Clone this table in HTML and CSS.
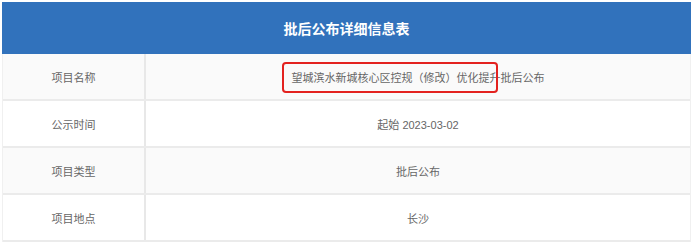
FILE: index.html
```html
<!DOCTYPE html>
<html lang="zh">
<head>
<meta charset="utf-8">
<link rel="stylesheet" href="styles.css">
</head>
<body>
<div class="sheet">
  <div class="head">批后公布详细信息表</div>
  <div class="row alt">
    <div class="label">项目名称</div>
    <div class="value mark-host">望城滨水新城核心区控规（修改）优化提升批后公布<span class="mark"></span></div>
  </div>
  <div class="row">
    <div class="label">公示时间</div>
    <div class="value">起始 2023-03-02</div>
  </div>
  <div class="row alt">
    <div class="label">项目类型</div>
    <div class="value">批后公布</div>
  </div>
  <div class="row">
    <div class="label">项目地点</div>
    <div class="value">长沙</div>
  </div>
</div>
</body>
</html>
```
FILE: styles.css
```css
html, body {
  margin: 0;
  padding: 0;
  background: #ffffff;
}
body {
  font-family: "Liberation Sans", "Noto Sans CJK SC", sans-serif;
}
.sheet {
  width: 687px;
  margin: 2px 0 0 2px;
  border-left: 1px solid #f0f0f0;
  border-right: 1px solid #f0f0f0;
}
.head {
  height: 52px;
  background: #3172bc;
  color: #ffffff;
  font-weight: bold;
  font-size: 14px;
  display: flex;
  align-items: center;
  justify-content: center;
  margin: 0 -1px;
}
.row {
  display: grid;
  grid-template-columns: 143px 1fr;
  height: 45px;
  border-bottom: 2px solid #ebebeb;
  background: #ffffff;
}
.row.alt {
  background: #fafafa;
}
.label, .value {
  display: flex;
  align-items: center;
  justify-content: center;
  font-size: 11px;
  color: #666666;
}
.label {
  border-right: 2px solid #e8e8e8;
}
.mark-host {
  position: relative;
}
.mark {
  position: absolute;
  left: 136px;
  top: 8px;
  width: 212px;
  height: 27px;
  border: 2px solid #e3221f;
  border-radius: 4px;
}
```
